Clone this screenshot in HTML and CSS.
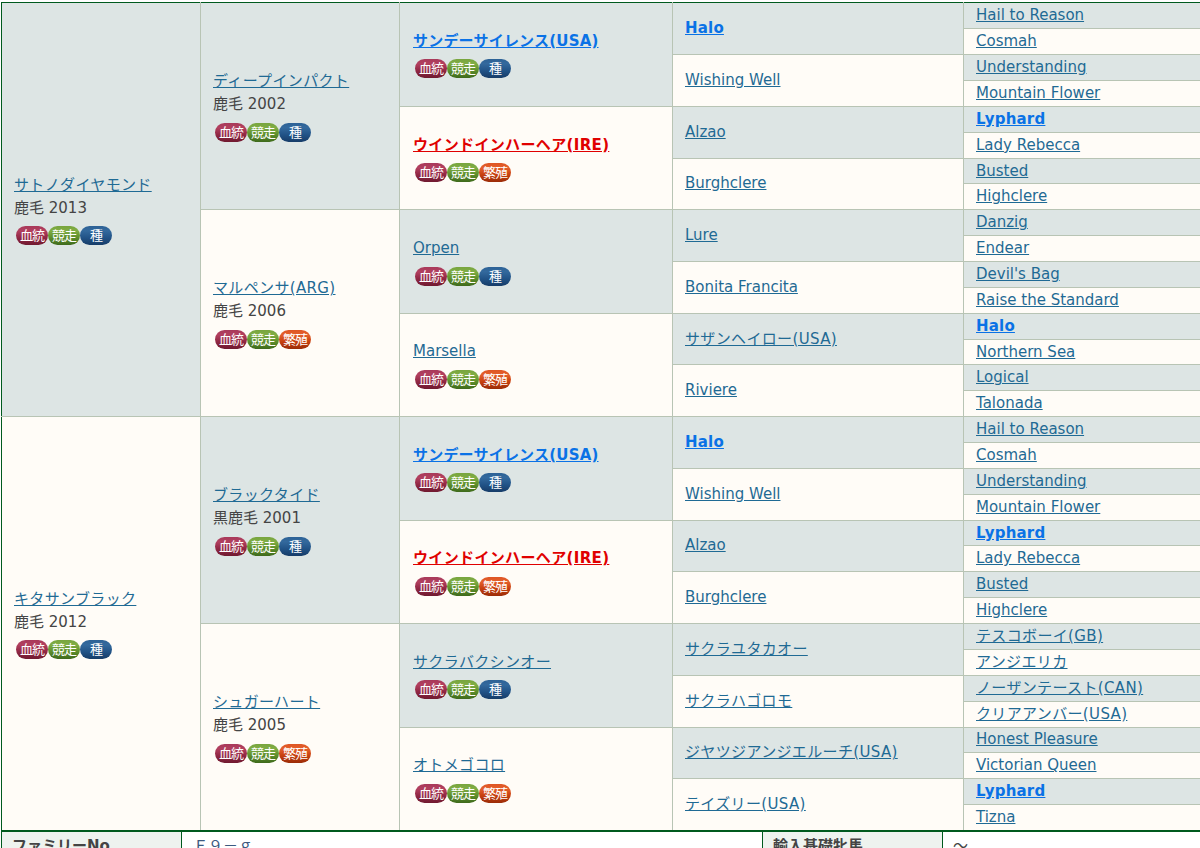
FILE: index.html
```html
<!DOCTYPE html>
<html lang="ja">
<head>
<meta charset="utf-8">
<title>血統表</title>
<link rel="stylesheet" href="styles.css">
</head>
<body>
<main class="page">
<table class="ped">
<colgroup><col class="c1"><col class="c2"><col class="c3"><col class="c4"><col class="c5"></colgroup>
<tbody>
<tr>
<td rowspan="16" class="d"><a href="#" class="ja">サトノダイヤモンド</a><br>鹿毛 2013<div class="bs"><span class="b r">血統</span><span class="b g">競走</span><span class="b n">種</span></div></td>
<td rowspan="8" class="d"><a href="#" class="ja">ディープインパクト</a><br>鹿毛 2002<div class="bs"><span class="b r">血統</span><span class="b g">競走</span><span class="b n">種</span></div></td>
<td rowspan="4" class="d"><a href="#" class="blue">サンデーサイレンス(USA)</a><div class="bs"><span class="b r">血統</span><span class="b g">競走</span><span class="b n">種</span></div></td>
<td rowspan="2" class="d"><a href="#" class="blue">Halo</a></td>
<td class="d"><a href="#">Hail to Reason</a></td></tr>
<tr><td class="l"><a href="#">Cosmah</a></td></tr>
<tr><td rowspan="2" class="l"><a href="#">Wishing Well</a></td><td class="d"><a href="#">Understanding</a></td></tr>
<tr><td class="l"><a href="#">Mountain Flower</a></td></tr>
<tr><td rowspan="4" class="l"><a href="#" class="red ja">ウインドインハーヘア(IRE)</a><div class="bs"><span class="b r">血統</span><span class="b g">競走</span><span class="b o">繁殖</span></div></td>
<td rowspan="2" class="d"><a href="#">Alzao</a></td><td class="d"><a href="#" class="blue">Lyphard</a></td></tr>
<tr><td class="l"><a href="#">Lady Rebecca</a></td></tr>
<tr><td rowspan="2" class="l"><a href="#">Burghclere</a></td><td class="d"><a href="#">Busted</a></td></tr>
<tr><td class="l"><a href="#">Highclere</a></td></tr>
<tr><td rowspan="8" class="l"><a href="#" class="ja">マルペンサ(ARG)</a><br>鹿毛 2006<div class="bs"><span class="b r">血統</span><span class="b g">競走</span><span class="b o">繁殖</span></div></td>
<td rowspan="4" class="d"><a href="#">Orpen</a><div class="bs"><span class="b r">血統</span><span class="b g">競走</span><span class="b n">種</span></div></td>
<td rowspan="2" class="d"><a href="#">Lure</a></td><td class="d"><a href="#">Danzig</a></td></tr>
<tr><td class="l"><a href="#">Endear</a></td></tr>
<tr><td rowspan="2" class="l"><a href="#">Bonita Francita</a></td><td class="d"><a href="#">Devil's Bag</a></td></tr>
<tr><td class="l"><a href="#">Raise the Standard</a></td></tr>
<tr><td rowspan="4" class="l"><a href="#">Marsella</a><div class="bs"><span class="b r">血統</span><span class="b g">競走</span><span class="b o">繁殖</span></div></td>
<td rowspan="2" class="d"><a href="#" class="ja">サザンヘイロー(USA)</a></td><td class="d"><a href="#" class="blue">Halo</a></td></tr>
<tr><td class="l"><a href="#">Northern Sea</a></td></tr>
<tr><td rowspan="2" class="l"><a href="#">Riviere</a></td><td class="d"><a href="#">Logical</a></td></tr>
<tr><td class="l"><a href="#">Talonada</a></td></tr>

<tr>
<td rowspan="16" class="l"><a href="#" class="ja">キタサンブラック</a><br>鹿毛 2012<div class="bs"><span class="b r">血統</span><span class="b g">競走</span><span class="b n">種</span></div></td>
<td rowspan="8" class="d"><a href="#" class="ja">ブラックタイド</a><br>黒鹿毛 2001<div class="bs"><span class="b r">血統</span><span class="b g">競走</span><span class="b n">種</span></div></td>
<td rowspan="4" class="d"><a href="#" class="blue">サンデーサイレンス(USA)</a><div class="bs"><span class="b r">血統</span><span class="b g">競走</span><span class="b n">種</span></div></td>
<td rowspan="2" class="d"><a href="#" class="blue">Halo</a></td>
<td class="d"><a href="#">Hail to Reason</a></td></tr>
<tr><td class="l"><a href="#">Cosmah</a></td></tr>
<tr><td rowspan="2" class="l"><a href="#">Wishing Well</a></td><td class="d"><a href="#">Understanding</a></td></tr>
<tr><td class="l"><a href="#">Mountain Flower</a></td></tr>
<tr><td rowspan="4" class="l"><a href="#" class="red ja">ウインドインハーヘア(IRE)</a><div class="bs"><span class="b r">血統</span><span class="b g">競走</span><span class="b o">繁殖</span></div></td>
<td rowspan="2" class="d"><a href="#">Alzao</a></td><td class="d"><a href="#" class="blue">Lyphard</a></td></tr>
<tr><td class="l"><a href="#">Lady Rebecca</a></td></tr>
<tr><td rowspan="2" class="l"><a href="#">Burghclere</a></td><td class="d"><a href="#">Busted</a></td></tr>
<tr><td class="l"><a href="#">Highclere</a></td></tr>
<tr><td rowspan="8" class="l"><a href="#" class="ja">シュガーハート</a><br>鹿毛 2005<div class="bs"><span class="b r">血統</span><span class="b g">競走</span><span class="b o">繁殖</span></div></td>
<td rowspan="4" class="d"><a href="#" class="ja">サクラバクシンオー</a><div class="bs"><span class="b r">血統</span><span class="b g">競走</span><span class="b n">種</span></div></td>
<td rowspan="2" class="d"><a href="#" class="ja">サクラユタカオー</a></td><td class="d"><a href="#" class="ja">テスコボーイ(GB)</a></td></tr>
<tr><td class="l"><a href="#" class="ja">アンジエリカ</a></td></tr>
<tr><td rowspan="2" class="l"><a href="#" class="ja">サクラハゴロモ</a></td><td class="d"><a href="#" class="ja">ノーザンテースト(CAN)</a></td></tr>
<tr><td class="l"><a href="#" class="ja">クリアアンバー(USA)</a></td></tr>
<tr><td rowspan="4" class="l"><a href="#" class="ja">オトメゴコロ</a><div class="bs"><span class="b r">血統</span><span class="b g">競走</span><span class="b o">繁殖</span></div></td>
<td rowspan="2" class="d"><a href="#" class="ja">ジヤツジアンジエルーチ(USA)</a></td><td class="d"><a href="#">Honest Pleasure</a></td></tr>
<tr><td class="l"><a href="#">Victorian Queen</a></td></tr>
<tr><td rowspan="2" class="l"><a href="#" class="ja">テイズリー(USA)</a></td><td class="d"><a href="#" class="blue">Lyphard</a></td></tr>
<tr><td class="l"><a href="#">Tizna</a></td></tr>
</tbody>
</table>
<table class="info">
<colgroup><col class="i1"><col class="i2"><col class="i3"><col class="i4"></colgroup>
<tbody>
<tr><th>ファミリーNo</th><td class="fam">Ｆ９－ｇ</td><th>輸入基礎牝馬</th><td>～</td></tr>
</tbody>
</table>
</main>
</body>
</html>
```

FILE: styles.css
```css
* { box-sizing: border-box; }
html, body { margin: 0; height: 848px; overflow: hidden; background: #fff; }
body {
  font-family: "DejaVu Sans", "Noto Sans CJK JP", sans-serif;
  font-size: 15px;
  line-height: 23px;
  color: #444;
}
.page { padding: 2px 0 0 1px; width: 1200px; }
table { border-collapse: collapse; table-layout: fixed; width: 1199px; }
.c1 { width: 199px; } .c2 { width: 199px; } .c3 { width: 273px; } .c4 { width: 291px; } .c5 { width: 237px; }
.ped tr { height: 25.86px; }
.ped tr:first-child { height: 26.3px; }
.ped td {
  padding: 0 12px;
  border: 1px solid #b8c4b4;
  vertical-align: middle;
  overflow: hidden;
  white-space: nowrap;
}
.ped td[rowspan="4"] { padding-left: 13px; }
.ped td[rowspan="16"] { border-left-color: #005a1e; }
.ped tr:first-child td { border-top-color: #005a1e; }
.ped tr:last-child td, .ped tr:nth-child(17) td[rowspan="16"], .ped tr:nth-child(25) td[rowspan="8"], .ped tr:nth-child(29) td[rowspan="4"], .ped tr:nth-child(31) td[rowspan="2"] { border-bottom-color: #005a1e; }
.d { background: #dde5e4; }
.l { background: #fffcf7; }
a { color: #1f6a94; }
a.ja { letter-spacing: .35px; }
a.blue { color: #0a72e6; font-weight: 700; letter-spacing: .2px; }
a.red { color: #e00000; font-weight: 700; }
.bs { display: flex; height: 19.5px; margin: 6.5px 0 0 2px; }
.b {
  flex: none;
  width: 32px;
  height: 19px;
  border-radius: 10px;
  color: #fff;
  font-size: 13px;
  line-height: 19px;
  text-align: center;
  white-space: nowrap;
  letter-spacing: -1px;
}
.r { background: linear-gradient(#a8395a, #b2405f 25%, #922845 60%, #701a30); }
.g { background: linear-gradient(#78a53e, #80ad45 25%, #5f8f2c 60%, #3e6a1c); }
.n { background: linear-gradient(#2d6296, #33699d 25%, #225488 60%, #163c68); }
.o { background: linear-gradient(#de5524, #e4602c 25%, #c8400f 60%, #9a2c08); }
.info { border-top: 1px solid #005a1e; border-left: 1px solid #005a1e; }
.i1 { width: 180px; } .i2 { width: 581px; } .i3 { width: 180px; } .i4 { width: 258px; }
.info th, .info td { padding: 0 10px; height: 30px; border: 1px solid #005a1e; text-align: left; vertical-align: middle; line-height: 23px; }
.info tr > :last-child { border-right: 0; }
.info th { background: #eef3ef; font-weight: 700; }
.info .fam { color: #3c5a80; padding-left: 11px; }
```
